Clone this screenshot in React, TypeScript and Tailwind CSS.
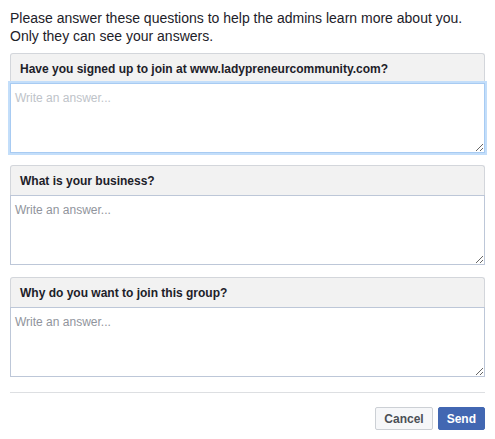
import React from "react";

const questions = [
  "Have you signed up to join at www.ladypreneurcommunity.com?",
  "What is your business?",
  "Why do you want to join this group?",
];

function QuestionCard({ title, focused }: { title: string; focused?: boolean }) {
  return (
    <div className="flex flex-col h-[100px]">
      <div className="h-[30px] shrink-0 flex items-center pl-[9px] bg-[#f2f2f2] border border-b-0 border-[#d3d6db] rounded-t-[3px] text-[12px] font-bold text-[#1d2129]">
        {title}
      </div>
      <textarea
        placeholder="Write an answer..."
        className={
          focused
            ? "flex-1 w-full px-[4px] pt-[6px] text-[12px] leading-[16px] text-[#1d2129] bg-white border border-[#a8cbf2] shadow-[0_0_0_2px_#c3defa] outline-none placeholder:text-[#bec3c9] resize-y"
            : "flex-1 w-full px-[4px] pt-[6px] text-[12px] leading-[16px] text-[#1d2129] bg-white border border-[#bdc7d8] outline-none placeholder:text-[#90949c] resize-y"
        }
      />
    </div>
  );
}

export default function App() {
  return (
    <div
      className="w-[495px] h-[439px] bg-white px-[10px] pt-[9px]"
      style={{ fontFamily: '"Liberation Sans", Arial, Helvetica, sans-serif' }}
    >
      <p className="text-[14px] leading-[18px] text-[#1d2129]">
        Please answer these questions to help the admins learn more about you.
        <br />
        Only they can see your answers.
      </p>

      <div className="mt-[8px] flex flex-col gap-[12px]">
        {questions.map((q, i) => (
          <QuestionCard key={q} title={q} focused={i === 0} />
        ))}
      </div>

      <div className="mt-[15px] h-px bg-[#dddfe2]" />

      <div className="mt-[14px] flex justify-end gap-[5px]">
        <button className="h-[23px] px-[8px] rounded-[2px] border border-[#ccd0d5] bg-[#f6f7f9] text-[12px] font-bold text-[#4b4f56]">
          Cancel
        </button>
        <button className="h-[23px] px-[8px] rounded-[2px] border border-[#4267b2] bg-[#4267b2] text-[12px] font-bold text-white">
          Send
        </button>
      </div>
    </div>
  );
}
